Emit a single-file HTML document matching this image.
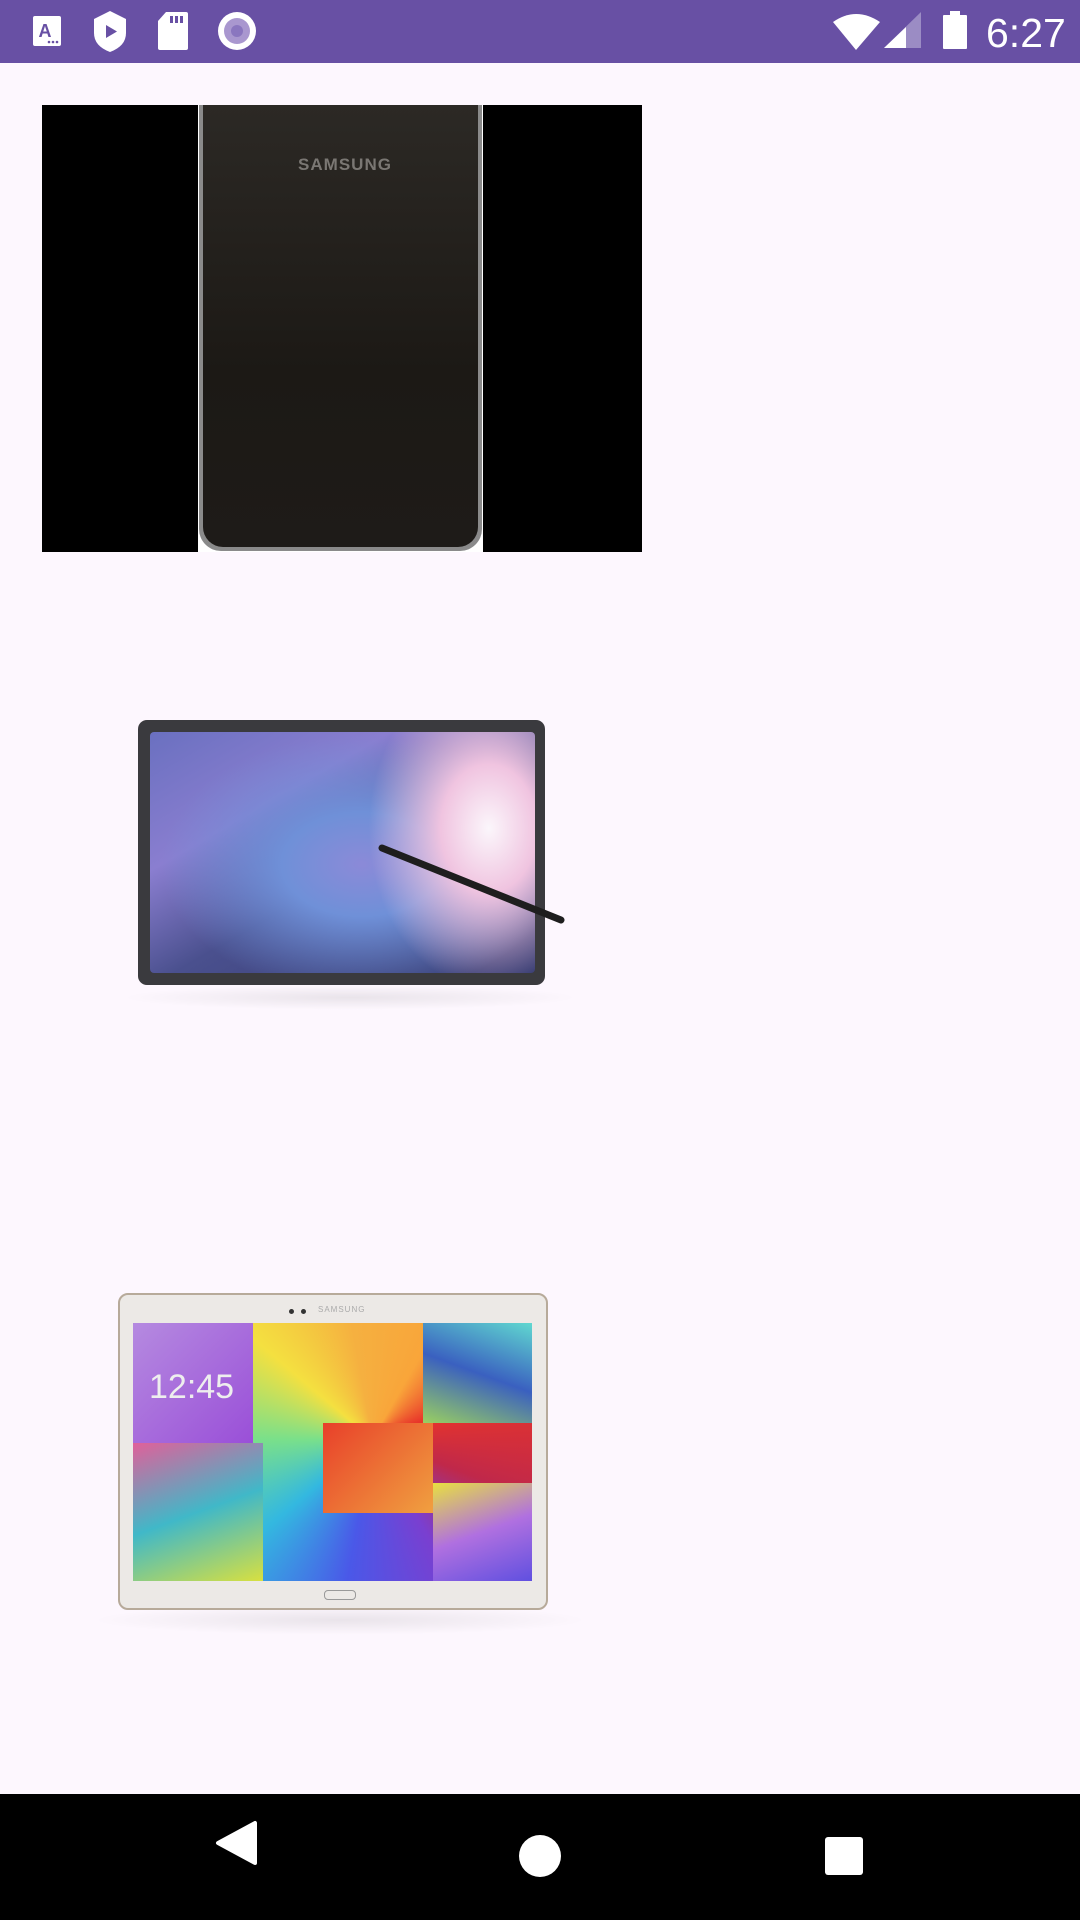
<!DOCTYPE html>
<html><head><meta charset="utf-8"><style>
html,body{margin:0;padding:0;width:1080px;height:1920px;overflow:hidden;background:#fdf7fe;font-family:"Liberation Sans",sans-serif;position:relative}
.abs{position:absolute}
</style></head><body>
<div class="abs" style="left:0;top:0;width:1080px;height:63px;background:#6850a4"></div>
<svg class="abs" style="left:0;top:0" width="1080" height="63" viewBox="0 0 1080 63">
 <rect x="33" y="16" width="28" height="30" rx="2" fill="#fff"/>
 <text x="45" y="37" font-size="18" font-weight="bold" fill="#6850a4" text-anchor="middle" font-family="Liberation Sans">A</text>
 <circle cx="49" cy="42" r="1.3" fill="#6850a4"/><circle cx="53" cy="42" r="1.3" fill="#6850a4"/><circle cx="57" cy="42" r="1.3" fill="#6850a4"/>
 <path d="M94 19 L110 11 L126 19 L126 33 Q126 46 110 52 Q94 46 94 33 Z" fill="#fff"/>
 <path d="M106 25 L117 31.5 L106 38 Z" fill="#6850a4"/>
 <path d="M166 12 L186 12 Q188 12 188 14 L188 48 Q188 50 186 50 L160 50 Q158 50 158 48 L158 21 Z" fill="#fff"/>
 <rect x="170" y="16" width="3" height="7" fill="#6850a4"/><rect x="175" y="16" width="3" height="7" fill="#6850a4"/><rect x="180" y="16" width="3" height="7" fill="#6850a4"/>
 <circle cx="237" cy="31" r="19" fill="#fff"/>
 <circle cx="237" cy="31" r="13" fill="#a997cf"/>
 <circle cx="237" cy="31" r="6" fill="#8a76bf"/>
 <path d="M833 22 Q856 6 880 22 L856 50 Z" fill="#fff"/>
 <path d="M884 48 L921 12 L921 48 Z" fill="#9b8cc4"/>
 <path d="M884 48 L906 27 L906 48 Z" fill="#fff"/>
 <rect x="943" y="15" width="24" height="34" rx="1" fill="#fff"/><rect x="950" y="11" width="10" height="5" fill="#fff"/>
 <text x="986" y="47" font-size="41" fill="#fff" font-family="Liberation Sans">6:27</text>
</svg>

<!-- phone -->
<div class="abs" style="left:42px;top:105px;width:156px;height:447px;background:#000"></div>
<div class="abs" style="left:483px;top:105px;width:159px;height:447px;background:#000"></div>
<div class="abs" style="left:198px;top:105px;width:285px;height:447px;background:#fff"></div>
<div class="abs" style="left:199px;top:105px;width:283px;height:446px;background:#8a8a8a;border-radius:0 0 22px 22px"></div>
<div class="abs" style="left:203px;top:105px;width:275px;height:442px;background:linear-gradient(#2c2925,#1c1915 60%,#1e1b18);border-radius:0 0 20px 20px"></div>
<div class="abs" style="left:290px;top:155px;width:110px;text-align:center;font-size:17px;font-weight:bold;color:#7a7773;letter-spacing:1px">SAMSUNG</div>

<!-- tablet 1 -->
<div class="abs" style="left:120px;top:985px;width:460px;height:25px;background:radial-gradient(ellipse at center,rgba(0,0,0,.08),rgba(0,0,0,0) 70%)"></div>
<div class="abs" style="left:138px;top:720px;width:407px;height:265px;background:#3a3a3e;border-radius:9px"></div>
<div class="abs" style="left:150px;top:732px;width:385px;height:241px;border-radius:4px;background:radial-gradient(ellipse 120px 160px at 88% 40%,#fbf6fb 0%,#f0c4e0 40%,rgba(220,150,210,0) 100%),radial-gradient(ellipse 200px 130px at 55% 55%,#8b8ad8 0%,#6f90d8 40%,rgba(0,0,0,0) 100%),linear-gradient(150deg,#6a70c0 0%,#8a7ed0 30%,#4a508e 55%,#343a70 100%)"></div>
<svg class="abs" style="left:0;top:0" width="1080" height="1100"><line x1="382" y1="848" x2="561" y2="920" stroke="#1e1e1e" stroke-width="7" stroke-linecap="round"/></svg>

<!-- tablet 2 -->
<div class="abs" style="left:90px;top:1605px;width:500px;height:30px;background:radial-gradient(ellipse at center,rgba(0,0,0,.08),rgba(0,0,0,0) 70%)"></div>
<div class="abs" style="left:118px;top:1293px;width:430px;height:317px;background:#ece9e6;border:2px solid #b7aa9a;box-sizing:border-box;border-radius:10px"></div>
<div class="abs" style="left:133px;top:1323px;width:399px;height:258px;background:
conic-gradient(from 30deg at 60% 45%,#f9a53a,#e8352a,#c0284a,#7a3fd0,#4a58e8,#33b8e0,#7ae08a,#f4e040,#f5b040,#f9a53a);overflow:hidden">
 <div class="abs" style="left:0;top:0;width:120px;height:120px;background:linear-gradient(135deg,#b58ae0,#9a4fd8)"></div>
 <div class="abs" style="left:0;top:120px;width:130px;height:138px;background:linear-gradient(160deg,#e0609a,#40b8c8 50%,#d8e040)"></div>
 <div class="abs" style="left:290px;top:0;width:109px;height:100px;background:linear-gradient(200deg,#60d8d0,#3a60c0,#9ad060)"></div>
 <div class="abs" style="left:300px;top:160px;width:99px;height:98px;background:linear-gradient(160deg,#e8e040,#b070e0,#6050e0)"></div>
 <div class="abs" style="left:190px;top:100px;width:110px;height:90px;background:linear-gradient(135deg,#e8402a,#f0a040)"></div>
 <div class="abs" style="left:16px;top:45px;font-size:34px;color:#eee">12:45</div>
</div>
<div class="abs" style="left:289px;top:1309px;width:5px;height:5px;border-radius:50%;background:#333"></div>
<div class="abs" style="left:301px;top:1309px;width:5px;height:5px;border-radius:50%;background:#333"></div>
<div class="abs" style="left:318px;top:1305px;font-size:8px;color:#aaa;letter-spacing:1px">SAMSUNG</div>
<div class="abs" style="left:324px;top:1590px;width:30px;height:8px;border:1px solid #999;border-radius:4px"></div>

<!-- nav bar -->
<div class="abs" style="left:0;top:1794px;width:1080px;height:126px;background:#000"></div>
<svg class="abs" style="left:0;top:1794px" width="1080" height="126">
 <path d="M255 29 L255 69 L218 49 Z" fill="#fff" stroke="#fff" stroke-width="4" stroke-linejoin="round"/>
 <circle cx="540" cy="62" r="21" fill="#fff"/>
 <rect x="825" y="43" width="38" height="38" rx="3" fill="#fff"/>
</svg>
</body></html>
